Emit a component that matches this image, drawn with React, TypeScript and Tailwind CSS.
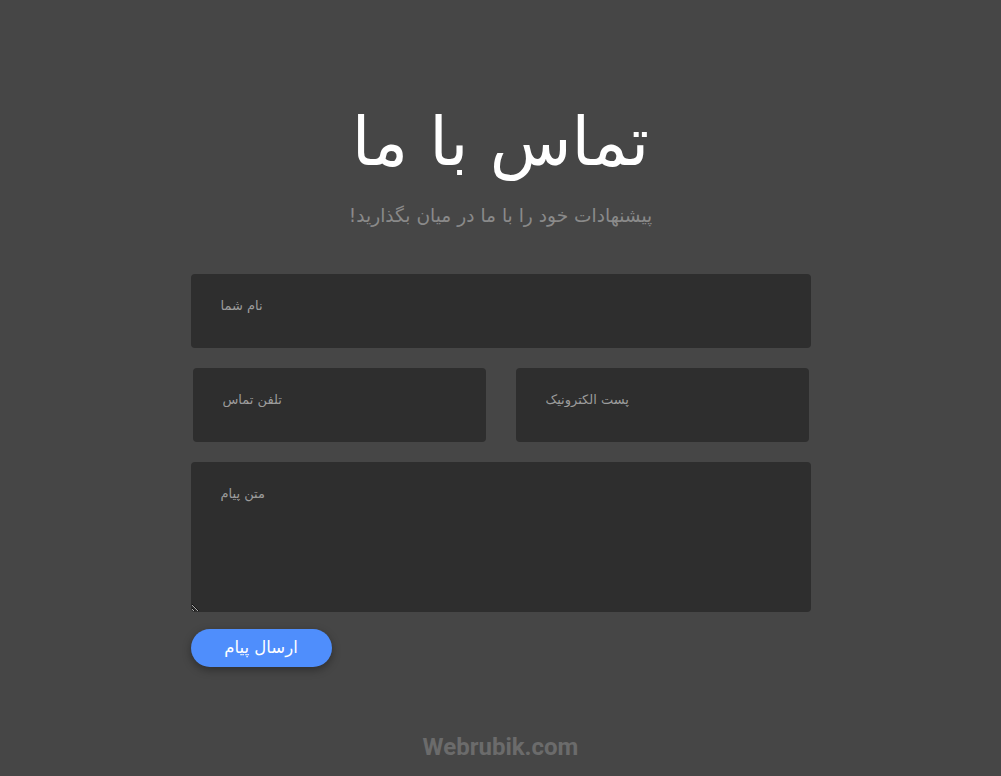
import React from "react";

const fieldCls =
  "w-full bg-[#2e2e2e] rounded-[4px] text-left text-[13px] text-[#cfcfcf] placeholder:text-[#9c9c9c] outline-none px-[30px]";

const App = () => {
  return (
    <div
      className="min-h-[776px] w-full bg-[#464646] flex flex-col items-center"
      style={{ fontFamily: '"DejaVu Sans", sans-serif' }}
    >
      <h1 dir="rtl" className="mt-[92px] text-white text-[67px] leading-[100px] font-normal">
        تماس با ما
      </h1>
      <p dir="rtl" className="mt-[10px] text-[#8a8a8a] text-[18.6px] leading-[28px]">
        پیشنهادات خود را با ما در میان بگذارید!
      </p>

      <form className="mt-[44px] w-[620px] flex flex-col">
        <input dir="rtl" className={fieldCls + " h-[74px] pb-[12px]"} placeholder="نام شما" />
        <div className="mt-[20px] px-[2px] grid grid-cols-2 gap-[30px]">
          <input dir="rtl" className={fieldCls + " h-[74px] pb-[12px]"} placeholder="تلفن تماس" />
          <input dir="rtl" className={fieldCls + " h-[74px] pb-[12px]"} placeholder="پست الکترونیک" />
        </div>
        <textarea
          dir="rtl"
          className={fieldCls + " mt-[20px] h-[150px] pt-[22px] leading-[20px] block"}
          placeholder="متن پیام"
        />
        <div className="mt-[17px]">
          <button
            type="button"
            dir="rtl"
            className="w-[141px] h-[38px] rounded-full bg-[#4f8efc] text-white text-[16.5px] shadow-[0_3px_8px_rgba(0,0,0,0.35)]"
          >
            ارسال پیام
          </button>
        </div>
      </form>

      <div
        className="mt-[62px] text-[#6b6b6b] text-[24px] font-bold"
        style={{ fontFamily: "Roboto, sans-serif" }}
      >
        Webrubik.com
      </div>
    </div>
  );
};

export default App;
